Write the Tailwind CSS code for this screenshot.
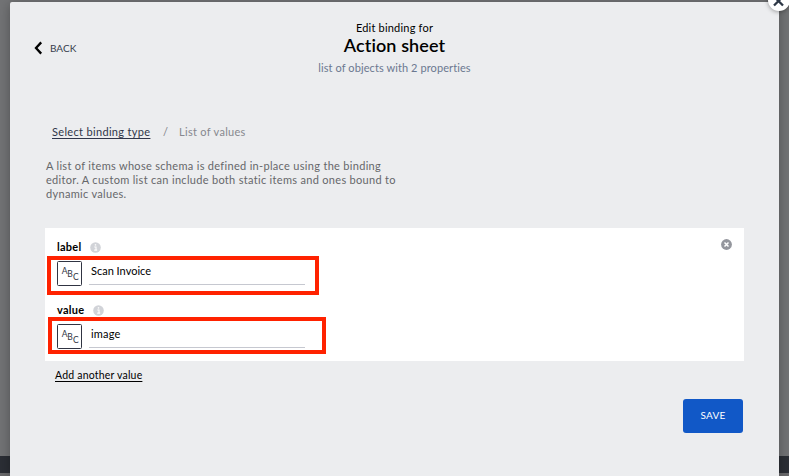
<!DOCTYPE html>
<html lang="en">
<head>
<meta charset="utf-8">
<title>Edit binding</title>
<script src="https://cdn.jsdelivr.net/npm/@tailwindcss/browser@4"></script>
</head>
<body class="relative h-[476px] w-[789px] overflow-hidden bg-[#727375] font-['Lato','Noto_Sans',sans-serif] text-[11px] text-black">
  <div class="absolute inset-x-0 bottom-0 h-5 border-b-3 border-[#69696b] bg-[#2b2e35]"></div>

  <main class="relative mx-auto mt-[2px] flex h-[474px] w-[769px] flex-col rounded-t-[2px] bg-[#ecedef] px-[35px] shadow-[0_2px_12px_rgba(0,0,0,0.3)]">
    <header class="grid h-[117px] grid-cols-[1fr_auto_1fr] items-start whitespace-nowrap">
      <a class="-ml-[11px] mt-[38px] flex h-4 items-center gap-[7px] text-[10px] tracking-[0px] text-[#363c4c]">
        <svg class="h-[14px] w-[9px]" viewBox="0 0 9 14" fill="none" stroke="#000" stroke-width="2.3"><path d="M7.2 1.4 2 7l5.2 5.6"/></svg>BACK</a>
      <div class="mt-[18px] text-center">
        <div class="h-4 text-[11px] leading-4 tracking-[0.2px]">Edit binding for</div>
        <h1 class="h-5 text-[18px] font-semibold leading-[18px] tracking-[0.1px]">Action sheet</h1>
        <div class="mt-[4px] text-[11px] leading-4 tracking-[0.09px] text-[#6b7890]">list of objects with 2 properties</div>
      </div>
      <div></div>
    </header>

    <nav class="ml-[7px] mt-[5px] flex h-4 items-center whitespace-nowrap leading-4">
      <a class="w-[111px] tracking-[0.33px] text-[#30364a] underline underline-offset-2">Select binding type</a>
      <span class="w-4 text-[#7e8086]">/</span>
      <span class="tracking-[0.3px] text-[#86888e]">List of values</span>
    </nav>
    <p class="ml-[1px] mt-[19px] h-[42px] whitespace-nowrap leading-[14px] tracking-[0.31px] text-[#66676a]">A list of items whose schema is defined in-place using the binding<br>editor. A custom list can include both static items and ones bound to<br>dynamic values.</p>

    <section class="relative mt-[27px] h-[133px] w-[699px] bg-white pl-3 pt-3">
      <div class="h-[63px]">
        <div class="flex h-[14px] items-center gap-[9px]"><b class="text-[11px] tracking-[0.25px]">label</b>
          <svg class="size-[11px]" viewBox="0 0 11 11"><circle cx="5.5" cy="5.5" r="5.3" fill="#d1d3d8"/><path d="M4.3 5H6v3M4.2 8.1h3" fill="none" stroke="#fff" stroke-width="1.1"/><path d="M4.8 2.2h1.4v1.4H4.8z" fill="#fff"/></svg></div>
        <div class="mt-[7px] flex h-[25px] gap-[7px]">
          <svg class="size-[25px] font-['Lato',sans-serif]" viewBox="0 0 25 25"><rect x=".5" y=".5" width="24" height="24" rx="1" fill="none" stroke="#303442"/><g font-size="8.5" fill="#303442"><text x="4.8" y="13">A</text><text x="10.3" y="15.7">B</text><text x="16" y="18.7">C</text></g></svg>
          <div class="h-6 w-[216px] border-b border-[#c6c8d0] pl-[2px] leading-[20px] tracking-[0px]">Scan Invoice</div>
        </div>
      </div>
      <div class="h-[63px]">
        <div class="flex h-[14px] items-center gap-[9px]"><b class="text-[11px] tracking-[0.25px]">value</b>
          <svg class="size-[11px]" viewBox="0 0 11 11"><circle cx="5.5" cy="5.5" r="5.3" fill="#d1d3d8"/><path d="M4.3 5H6v3M4.2 8.1h3" fill="none" stroke="#fff" stroke-width="1.1"/><path d="M4.8 2.2h1.4v1.4H4.8z" fill="#fff"/></svg></div>
        <div class="mt-[7px] flex h-[25px] gap-[7px]">
          <svg class="size-[25px] font-['Lato',sans-serif]" viewBox="0 0 25 25"><rect x=".5" y=".5" width="24" height="24" rx="1" fill="none" stroke="#303442"/><g font-size="8.5" fill="#303442"><text x="4.8" y="13">A</text><text x="10.3" y="15.7">B</text><text x="16" y="18.7">C</text></g></svg>
          <div class="h-6 w-[216px] border-b border-[#c6c8d0] pl-[2px] leading-[20px] tracking-[0.2px]">image</div>
        </div>
      </div>
      <svg class="absolute right-[12px] top-[11px] size-[11px]" viewBox="0 0 11 11"><circle cx="5.5" cy="5.5" r="5.4" fill="#94969d"/><path d="m3.5 3.5 4 4m0-4-4 4" stroke="#fff" stroke-width="1.5"/></svg>
      <div class="absolute left-[2px] top-[28px] h-[39px] w-[272px] border-4 border-[#ff2200]"></div>
      <div class="absolute left-[3px] top-[89px] h-[37px] w-[278px] border-4 border-[#ff2200]"></div>
    </section>

    <a class="ml-[10px] mt-[6px] h-4 self-start whitespace-nowrap text-[10.5px] leading-4 tracking-[0.2px] underline underline-offset-2">Add another value</a>
    <button class="mr-[1px] mt-[16px] h-[34px] w-[60px] self-end rounded-[3px] bg-[#1158c7] pb-[2px] text-[10px] tracking-[0.2px] text-white">SAVE</button>
    <svg class="absolute -right-[11px] -top-[13px] size-[22px] rounded-full bg-white shadow-[0_1px_4px_rgba(0,0,0,0.35)]" viewBox="0 0 22 22"><path d="m6 7.5 9 9m0-9-9 9" stroke="#2d3746" stroke-width="2.3"/></svg>
  </main>
</body>
</html>
